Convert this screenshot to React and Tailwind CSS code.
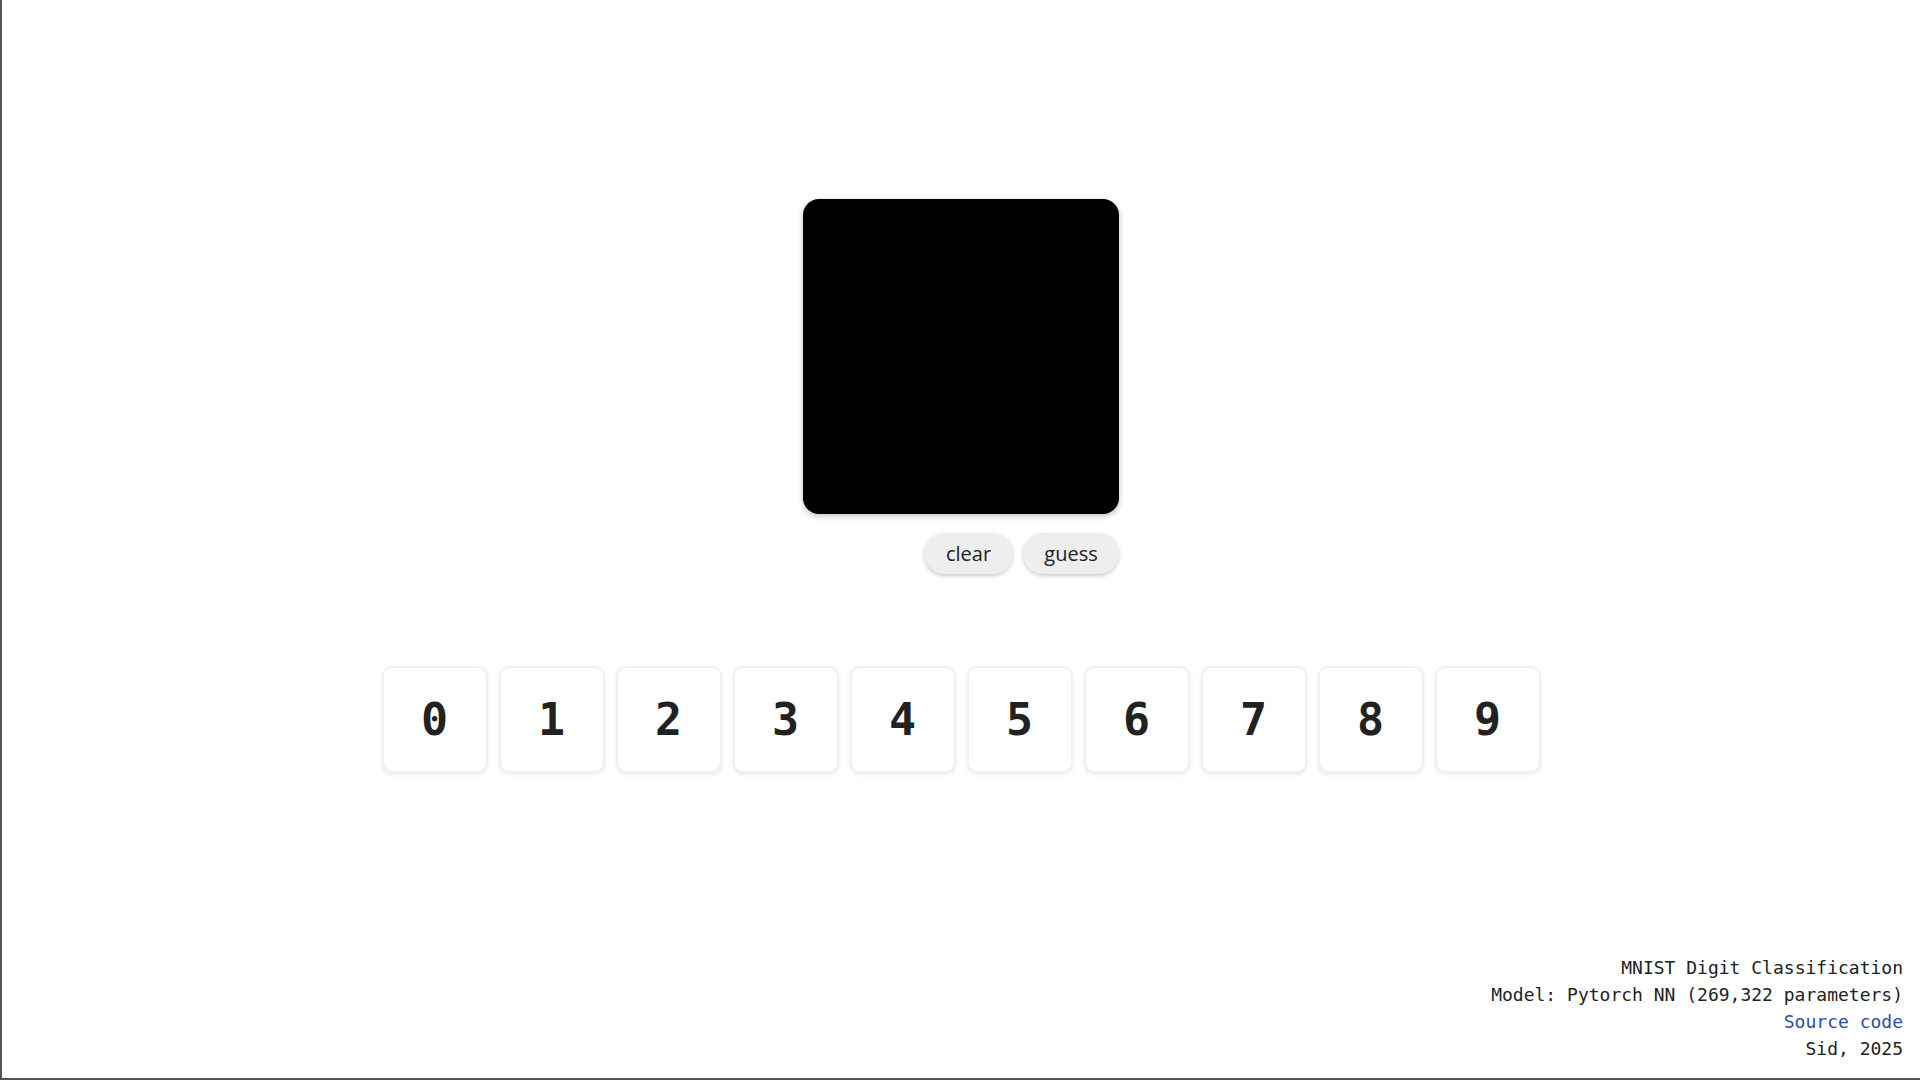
import React from 'react';

const digits = [0, 1, 2, 3, 4, 5, 6, 7, 8, 9];

export default function App() {
  return (
    <div className="h-screen flex flex-col bg-white border-l-2 border-b-2 border-[#555] overflow-hidden">
      <div className="flex flex-col items-center pt-[199px]">
        {/* Drawing canvas */}
        <div className="flex flex-col items-end">
          <div className="w-[316px] h-[315px] bg-black rounded-[16px] shadow-[0_2px_6px_rgba(0,0,0,0.25)]"></div>
          <div className="flex gap-[10px] mt-[19px]">
            <button className="w-[89px] h-[41px] rounded-full bg-[#eeeeee] text-[#222] text-[20px] shadow-[0_2px_4px_rgba(0,0,0,0.2)] font-['Open_Sans',sans-serif]">
              clear
            </button>
            <button className="w-[96px] h-[41px] rounded-full bg-[#eeeeee] text-[#222] text-[20px] shadow-[0_2px_4px_rgba(0,0,0,0.2)] font-['Open_Sans',sans-serif]">
              guess
            </button>
          </div>
        </div>

        {/* Prediction boxes */}
        <div className="flex gap-[11px] mt-[92px]">
          {digits.map((d) => (
            <div
              key={d}
              className="w-[106px] h-[107px] rounded-[10px] border-2 border-[#f0f0f0] bg-white shadow-[0_2px_4px_rgba(0,0,0,0.08)] flex items-center justify-center text-[#222] text-[45px] font-bold font-['DejaVu_Sans_Mono',monospace]"
            >
              {d}
            </div>
          ))}
        </div>
      </div>

      {/* Footer */}
      <div className="mt-auto pb-[16px] pr-[17px] text-right text-[18px] leading-[27px] text-[#222] font-['DejaVu_Sans_Mono',monospace]">
        <p>MNIST Digit Classification</p>
        <p>Model: Pytorch NN (269,322 parameters)</p>
        <p>
          <a href="#" className="text-[#2a4fa3]">Source code</a>
        </p>
        <p>Sid, 2025</p>
      </div>
    </div>
  );
}
